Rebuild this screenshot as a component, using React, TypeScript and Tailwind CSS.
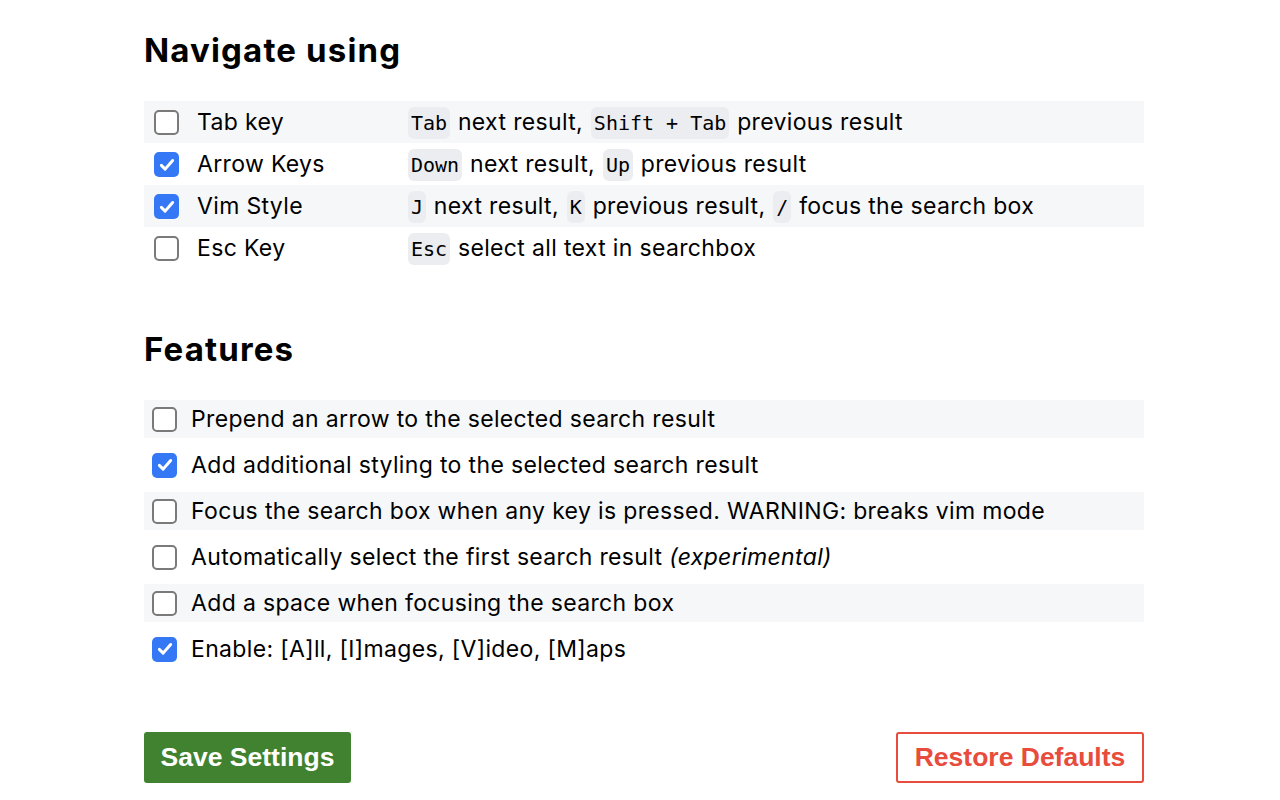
import React from "react";

const FONT = { fontFamily: "Inter, 'Noto Sans', sans-serif" };
const MONO = { fontFamily: "'DejaVu Sans Mono', 'Liberation Mono', monospace" };

const Box = ({ checked }: { checked: boolean }) =>
  checked ? (
    <span className="flex h-[25px] w-[25px] shrink-0 items-center justify-center rounded-[5px] bg-[#3478f6]">
      <svg width="18" height="18" viewBox="0 0 24 24" fill="none" stroke="white" strokeWidth="4" strokeLinecap="round" strokeLinejoin="round">
        <polyline points="4.5 12.5 9.5 17.5 19.5 6" />
      </svg>
    </span>
  ) : (
    <span className="block h-[25px] w-[25px] shrink-0 rounded-[5px] border-2 border-[#7a7a7a] bg-white" />
  );

const Key = ({ children }: { children: React.ReactNode }) => (
  <code
    style={MONO}
    className="mx-[1px] inline-block rounded-[6px] bg-[#ebedf0] px-[3px] py-[4px] text-[20px] leading-[24px] tracking-normal"
  >
    {children}
  </code>
);

const navRows: { label: string; checked: boolean; desc: React.ReactNode }[] = [
  {
    label: "Tab key",
    checked: false,
    desc: (
      <>
        <Key>Tab</Key> next result, <Key>Shift + Tab</Key> previous result
      </>
    ),
  },
  {
    label: "Arrow Keys",
    checked: true,
    desc: (
      <>
        <Key>Down</Key> next result, <Key>Up</Key> previous result
      </>
    ),
  },
  {
    label: "Vim Style",
    checked: true,
    desc: (
      <>
        <Key>J</Key> next result, <Key>K</Key> previous result, <Key>/</Key> focus the search box
      </>
    ),
  },
  {
    label: "Esc Key",
    checked: false,
    desc: (
      <>
        <Key>Esc</Key> select all text in searchbox
      </>
    ),
  },
];

const features: { label: React.ReactNode; checked: boolean }[] = [
  { label: "Prepend an arrow to the selected search result", checked: false },
  { label: "Add additional styling to the selected search result", checked: true },
  { label: "Focus the search box when any key is pressed. WARNING: breaks vim mode", checked: false },
  {
    label: (
      <>
        Automatically select the first search result <em>(experimental)</em>
      </>
    ),
    checked: false,
  },
  { label: "Add a space when focusing the search box", checked: false },
  { label: "Enable: [A]ll, [I]mages, [V]ideo, [M]aps", checked: true },
];

export default function App() {
  return (
    <div style={FONT} className="min-h-[800px] bg-white text-black">
      <div className="ml-[144px] w-[1000px] pt-[30px]">
        <h2 className="text-[33px] font-bold leading-[40px] tracking-[0.035em]">Navigate using</h2>

        <div className="mt-[31px] flex flex-col">
          {navRows.map((r, i) => (
            <div
              key={r.label}
              className={`flex h-[42px] items-center pt-[1px] text-[23px] tracking-[0.015em] ${i % 2 === 0 ? "bg-[#f6f7f9]" : ""}`}
            >
              <div className="flex w-[53px] pl-[10px]">
                <Box checked={r.checked} />
              </div>
              <div className="w-[210px]">{r.label}</div>
              <div className="whitespace-nowrap">{r.desc}</div>
            </div>
          ))}
        </div>

        <h2 className="mt-[60px] text-[33px] font-bold leading-[40px] tracking-[0.035em]">Features</h2>

        <div className="mt-[31px] flex flex-col gap-[8px]">
          {features.map((f, i) => (
            <div
              key={i}
              className={`flex h-[38px] items-center gap-[14px] pl-[8px] text-[23px] tracking-[0.015em] ${i % 2 === 0 ? "bg-[#f6f7f9]" : ""}`}
            >
              <Box checked={f.checked} />
              <span className="whitespace-nowrap">{f.label}</span>
            </div>
          ))}
        </div>

        <div
          className="mt-[64px] flex items-center justify-between"
          style={{ fontFamily: "'Liberation Sans', Arial, sans-serif" }}
        >
          <button className="h-[51px] w-[207px] rounded-[3px] bg-[#40822f] text-[26.5px] font-bold text-white">
            Save Settings
          </button>
          <button className="h-[51px] w-[248px] rounded-[3px] border-2 border-[#e74c3c] bg-white text-[26.5px] font-bold text-[#e74c3c]">
            Restore Defaults
          </button>
        </div>
      </div>
    </div>
  );
}
